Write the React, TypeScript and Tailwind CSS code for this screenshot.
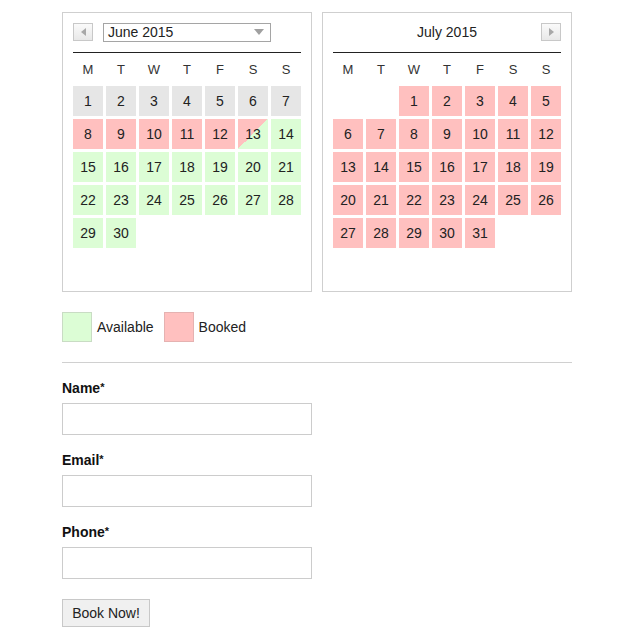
import React from "react";

type DayState = "past" | "booked" | "free" | "split";

interface Cell {
  day: number;
  state: DayState;
}

const DAY_NAMES = ["M", "T", "W", "T", "F", "S", "S"];

// June 2015 starts on a Monday, July 2015 on a Wednesday.
const june: (Cell | null)[] = Array.from({ length: 30 }, (_, i) => {
  const day = i + 1;
  let state: DayState = "free";
  if (day <= 7) state = "past";
  else if (day <= 12) state = "booked";
  else if (day === 13) state = "split";
  return { day, state };
});

const july: (Cell | null)[] = [
  null,
  null,
  ...Array.from({ length: 31 }, (_, i) => ({ day: i + 1, state: "booked" as DayState })),
];

const cellColor: Record<DayState, string> = {
  past: "bg-[#e6e6e6]",
  booked: "bg-[#ffc0bf]",
  free: "bg-[#dcfdd5]",
  split: "bg-[linear-gradient(to_bottom_right,#ffc0bf_50%,#dcfdd5_50%)]",
};

function NavButton({ dir }: { dir: "prev" | "next" }) {
  return (
    <button
      type="button"
      className="w-[20px] h-[18px] flex items-center justify-center border border-[#c8c8c8] bg-[linear-gradient(#fafafa,#e8e8e8)]"
    >
      {dir === "prev" ? (
        <span className="block w-0 h-0 border-y-[4px] border-y-transparent border-r-[5px] border-r-[#a8a8a8]" />
      ) : (
        <span className="block w-0 h-0 border-y-[4px] border-y-transparent border-l-[5px] border-l-[#a8a8a8]" />
      )}
    </button>
  );
}

function Calendar({
  title,
  cells,
  side,
}: {
  title: string;
  cells: (Cell | null)[];
  side: "left" | "right";
}) {
  return (
    <div className="w-[250px] h-[280px] border border-[#cfcfcf] bg-white px-[10px] pt-[10px]">
      <div className="h-[18px] flex items-center">
        {side === "left" ? (
          <>
            <NavButton dir="prev" />
            <div className="ml-[10px] w-[168px] h-[19px] border border-[#a5a5a5] flex items-center justify-between pl-[4px] pr-[6px]">
              <span className="text-[14px] leading-none text-[#222]">{title}</span>
              <span className="block w-0 h-0 border-x-[5px] border-x-transparent border-t-[6px] border-t-[#a0a0a0]" />
            </div>
          </>
        ) : (
          <>
            <div className="flex-1 text-center text-[14px] leading-none text-[#222] pl-[20px]">{title}</div>
            <NavButton dir="next" />
          </>
        )}
      </div>
      <div className="mt-[11px] h-px bg-[#222]" />
      <div className="grid grid-cols-7 gap-x-[3px] h-[33px] items-center">
        {DAY_NAMES.map((d, i) => (
          <div key={i} className="text-center text-[13px] text-[#333]">
            {d}
          </div>
        ))}
      </div>
      <div className="grid grid-cols-[repeat(7,30px)] auto-rows-[30px] gap-[3px]">
        {cells.map((c, i) =>
          c ? (
            <div
              key={i}
              className={`${cellColor[c.state]} flex items-center justify-center text-[14px] text-[#222]`}
            >
              {c.day}
            </div>
          ) : (
            <div key={i} />
          )
        )}
      </div>
    </div>
  );
}

function Field({ label }: { label: string }) {
  return (
    <div className="mt-[15px]">
      <div className="h-[20px] flex items-center text-[14px] leading-none font-bold text-[#111]">
        {label}
        <span className="self-start mt-[4px] text-[11px] leading-none font-bold">*</span>
      </div>
      <input
        type="text"
        className="mt-[5px] block w-[250px] h-[32px] border border-[#cccccc] bg-white outline-none"
      />
    </div>
  );
}

export default function App() {
  return (
    <div
      className="min-h-screen bg-white pl-[62px] pt-[12px] text-[#222]"
      style={{ fontFamily: '"Liberation Sans", Arial, sans-serif' }}
    >
      <div className="w-[510px]">
        <div className="flex gap-[10px]">
          <Calendar title="June 2015" cells={june} side="left" />
          <Calendar title="July 2015" cells={july} side="right" />
        </div>

        <div className="mt-[20px] flex items-center h-[30px]">
          <div className="w-[30px] h-[30px] bg-[#dcfdd5] border border-[#c9dcc4]" />
          <span className="ml-[5px] text-[14px]">Available</span>
          <div className="ml-[10px] w-[30px] h-[30px] bg-[#ffc0bf] border border-[#e5b2b1]" />
          <span className="ml-[5px] text-[14px]">Booked</span>
        </div>

        <div className="mt-[20px] h-px bg-[#d0d0d0]" />

        <Field label="Name" />
        <Field label="Email" />
        <Field label="Phone" />

        <button
          type="button"
          className="mt-[20px] w-[88px] h-[28px] border border-[#c8c8c8] bg-[#f0f0f0] text-[14px] text-[#222]"
        >
          Book Now!
        </button>
      </div>
    </div>
  );
}
